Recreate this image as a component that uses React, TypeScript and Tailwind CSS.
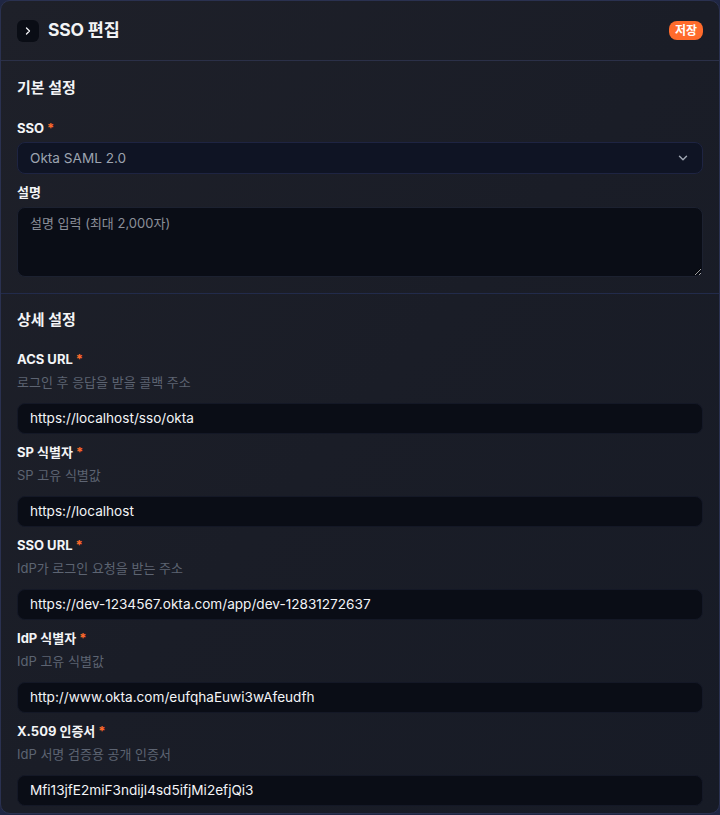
import React from "react";

const font = { fontFamily: 'Inter, "Noto Sans CJK KR", "Noto Sans", sans-serif' };

function Label({ text, required }: { text: string; required?: boolean }) {
  return (
    <div className="h-[20px] flex items-center text-[13px] font-bold text-[#f3f4f6] leading-[20px]">
      {text}
      {required && <span className="ml-[3px] text-[#ff6a2b]">*</span>}
    </div>
  );
}

function Field({ label, help, value }: { label: string; help: string; value: string }) {
  return (
    <div className="flex flex-col">
      <Label text={label} required />
      <div className="mt-[3px] h-[20px] text-[13px] leading-[20px] text-[#5d6472]">{help}</div>
      <div className="mt-[11px] h-[31px] rounded-lg bg-[#0a0d16] border border-[#141826] flex items-center px-[12px] text-[13.6px] text-[#f3f4f6]">
        {value}
      </div>
    </div>
  );
}

export default function App() {
  const fields = [
    { label: "ACS URL", help: "로그인 후 응답을 받을 콜백 주소", value: "https://localhost/sso/okta" },
    { label: "SP 식별자", help: "SP 고유 식별값", value: "https://localhost" },
    { label: "SSO URL", help: "IdP가 로그인 요청을 받는 주소", value: "https://dev-1234567.okta.com/app/dev-12831272637" },
    { label: "IdP 식별자", help: "IdP 고유 식별값", value: "http://www.okta.com/eufqhaEuwi3wAfeudfh" },
    { label: "X.509 인증서", help: "IdP 서명 검증용 공개 인증서", value: "Mfi13jfE2miF3ndijl4sd5ifjMi2efjQi3" },
  ];
  return (
    <div style={font} className="w-[720px] h-[815px] bg-[#1f2643] overflow-hidden">
      <div className="h-[814px] rounded-[10px] border border-[#2a3150] bg-gradient-to-br from-[#1e2029] via-[#1a1d27] to-[#171b26] overflow-hidden flex flex-col">
        {/* header */}
        <div className="h-[60px] flex items-center justify-between px-[16px] border-b border-[#2b3048]">
          <div className="flex items-center gap-[9px]">
            <div className="w-[22px] h-[22px] rounded-md bg-[#0a0d15] flex items-center justify-center">
              <svg width="12" height="12" viewBox="0 0 24 24" fill="none" stroke="#f3f4f6" strokeWidth="2.6" strokeLinecap="round" strokeLinejoin="round">
                <path d="m9 18 6-6-6-6" />
              </svg>
            </div>
            <div className="text-[17.5px] font-bold text-[#f3f4f6] tracking-[-0.2px]">SSO 편집</div>
          </div>
          <div className="h-[19px] px-[6px] rounded-lg bg-[#ff6b2c] text-white text-[12px] font-semibold flex items-center leading-none">저장</div>
        </div>

        {/* basic */}
        <div className="px-[16px] pt-[17px] pb-[16px] border-b border-[#222b4b]">
          <div className="h-[20px] text-[15px] font-bold text-[#f3f4f6] leading-[20px]">기본 설정</div>
          <div className="mt-[20px]">
            <Label text="SSO" required />
            <div className="mt-[4px] h-[32px] rounded-lg bg-[#0f1424] border border-[#1e2442] flex items-center justify-between px-[12px] text-[13.6px] text-[#9ca3af]">
              <span>Okta SAML 2.0</span>
              <svg width="14" height="14" viewBox="0 0 24 24" fill="none" stroke="#9ca3af" strokeWidth="2.5" strokeLinecap="round" strokeLinejoin="round">
                <path d="m6 9 6 6 6-6" />
              </svg>
            </div>
          </div>
          <div className="mt-[8px]">
            <Label text="설명" />
            <textarea
              readOnly
              placeholder="설명 입력 (최대 2,000자)"
              className="mt-[5px] block w-full h-[70px] rounded-lg bg-[#0a0d16] border border-[#1c2130] px-[12px] py-[6px] text-[13px] text-[#f3f4f6] placeholder:text-[#8a8f99] outline-none"
              style={font}
            />
          </div>
        </div>

        {/* detail */}
        <div className="px-[16px] pt-[16px] flex flex-col">
          <div className="h-[20px] text-[15px] font-bold text-[#f3f4f6] leading-[20px]">상세 설정</div>
          <div className="mt-[19px] flex flex-col gap-[8px]">
            {fields.map((f) => (
              <Field key={f.label} {...f} />
            ))}
          </div>
        </div>
      </div>
    </div>
  );
}
